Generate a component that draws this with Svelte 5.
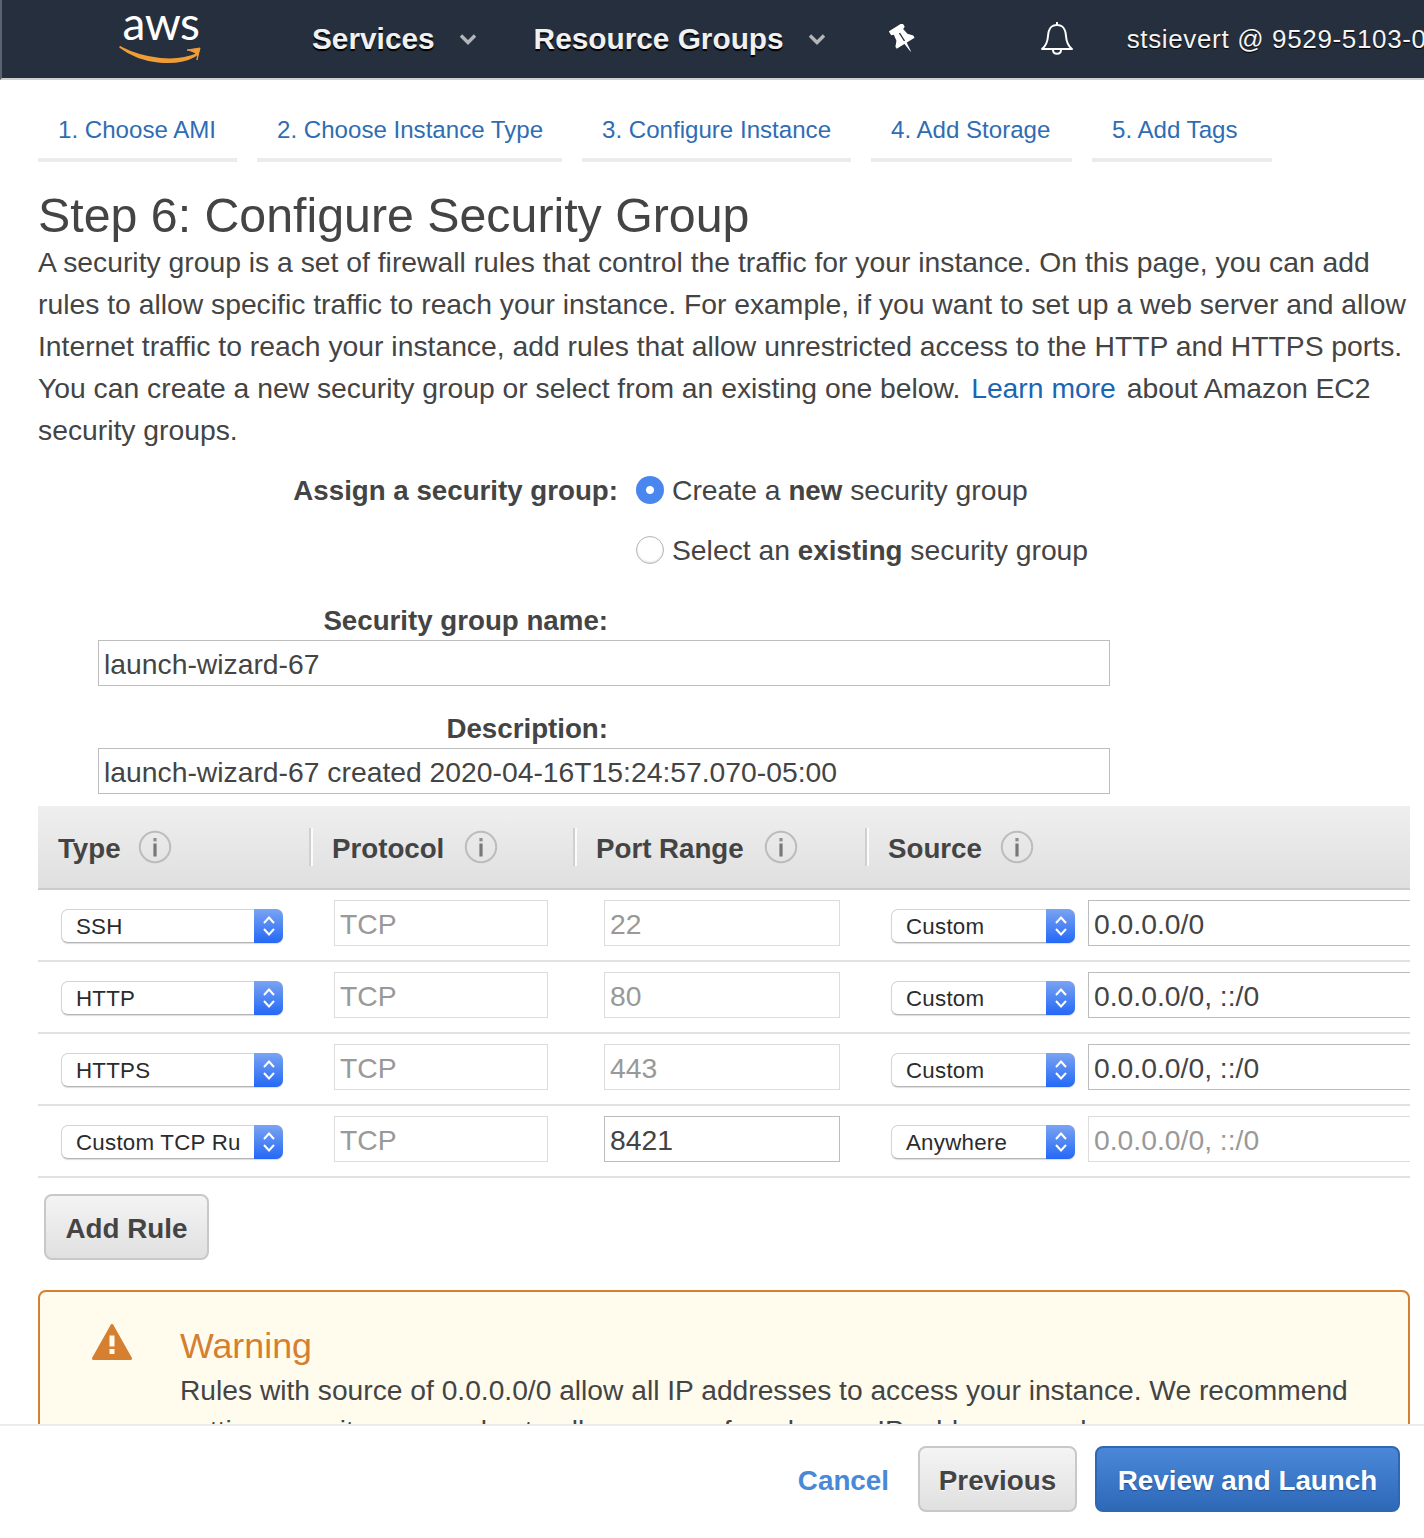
<script>
  const tabs = ['1. Choose AMI', '2. Choose Instance Type', '3. Configure Instance', '4. Add Storage', '5. Add Tags'];
  const tabWidths = [199, 305, 269, 201, 180];
  const cols = [
    { label: 'Type', w: 271, gap: 17 },
    { label: 'Protocol', w: 264, gap: 20 },
    { label: 'Port Range', w: 292, gap: 20 },
    { label: 'Source', w: 545, gap: 18 }
  ];
  const rows = [
    { type: 'SSH', port: '22', portOn: false, src: 'Custom', cidr: '0.0.0.0/0', cidrOn: true },
    { type: 'HTTP', port: '80', portOn: false, src: 'Custom', cidr: '0.0.0.0/0, ::/0', cidrOn: true },
    { type: 'HTTPS', port: '443', portOn: false, src: 'Custom', cidr: '0.0.0.0/0, ::/0', cidrOn: true },
    { type: 'Custom TCP Rule', port: '8421', portOn: true, src: 'Anywhere', cidr: '0.0.0.0/0, ::/0', cidrOn: false }
  ];
</script>

{#snippet chevron()}
  <svg class="chev" width="18" height="12" viewBox="0 0 18 12"><path d="M2 2.5 L9 9.5 L16 2.5" fill="none" stroke="#b4b6b8" stroke-width="3.4"/></svg>
{/snippet}

{#snippet spinner()}
  <span class="spin">
    <svg width="14" height="24" viewBox="0 0 14 24"><path d="M2 9 L7 3.5 L12 9 M2 15 L7 20.5 L12 15" fill="none" stroke="#fff" stroke-width="2"/></svg>
  </span>
{/snippet}

<div class="page">
  <header class="top">
    <div class="logo">
      <span class="aws">aws</span>
      <svg class="smile" width="84" height="20" viewBox="0 0 84 20">
        <path d="M1 2 C22 18 56 22 76 11 L78 9 C58 18 26 15 1 2 Z" fill="#ef9d36" stroke="#ef9d36" stroke-width="1.6" stroke-linejoin="round"/>
        <path d="M68 5 L81 3 L78 15 C79 10 78 7 68 5 Z" fill="#ef9d36" stroke="#ef9d36" stroke-width="1" stroke-linejoin="round"/>
      </svg>
    </div>
    <span class="nav services">Services</span>
    {@render chevron()}
    <span class="nav groups">Resource Groups</span>
    {@render chevron()}
    <svg class="pin" width="28" height="30" viewBox="0 0 28 30">
      <g transform="rotate(-32 14 15)" fill="#fff">
        <path d="M6 1 H22 V5.5 L19.5 6.5 L20.5 13 L24.5 17.5 V20 H3.5 V17.5 L7.5 13 L8.5 6.5 L6 5.5 Z"/>
        <path d="M12.6 19 H15.4 L14.3 29.5 H13.7 Z"/>
      </g>
      <path d="M10.5 9 L15.5 17" stroke="#262f3e" stroke-width="1.4"/>
    </svg>
    <svg class="bell" width="34" height="36" viewBox="0 0 34 36">
      <path d="M17 2 V5 M17 5 C10 5 8.5 10 8 16 C7.6 22 6 26 2 29 H32 C28 26 26.4 22 26 16 C25.5 10 24 5 17 5 Z" fill="none" stroke="#fff" stroke-width="2" stroke-linejoin="round"/>
      <path d="M13 30 C13 35 21 35 21 30" fill="none" stroke="#fff" stroke-width="2"/>
    </svg>
    <span class="user">stsievert @ 9529-5103-0</span>
  </header>

  <main class="content">
    <nav class="tabs">
      {#each tabs as tab, i}
        <a class="tab" style="width: {tabWidths[i]}px">{tab}</a>
      {/each}
    </nav>

    <h1>Step 6: Configure Security Group</h1>
    <p class="intro">A security group is a set of firewall rules that control the traffic for your instance. On this page, you can add rules to allow specific traffic to reach your instance. For example, if you want to set up a web server and allow Internet traffic to reach your instance, add rules that allow unrestricted access to the HTTP and HTTPS ports. You can create a new security group or select from an existing one below. <a class="more">Learn more</a> about Amazon EC2 security groups.</p>

    <div class="assign">
      <div class="assign-label"><b>Assign a security group:</b></div>
      <div class="options">
        <div class="option"><span class="radio on"></span><span>Create a <b>new</b> security group</span></div>
        <div class="option"><span class="radio"></span><span>Select an <b>existing</b> security group</span></div>
      </div>
    </div>

    <div class="field">
      <label class="field-label" for="sg-name">Security group name:</label>
      <div class="field-input" id="sg-name">launch-wizard-67</div>
    </div>
    <div class="field">
      <label class="field-label" for="sg-desc">Description:</label>
      <div class="field-input" id="sg-desc">launch-wizard-67 created 2020-04-16T15:24:57.070-05:00</div>
    </div>

    <section class="table">
      <div class="thead">
        {#each cols as col, i}
          <div class="th" class:first={i === 0} style="width: {col.w}px">
            <span>{col.label}</span>
            <svg class="info" style="margin-left: {col.gap}px" width="34" height="34" viewBox="0 0 34 34">
              <circle cx="17" cy="17" r="15.2" fill="none" stroke="#bcbcbc" stroke-width="2"/>
              <rect x="15.4" y="8" width="3.2" height="3.4" fill="#8f8f8f"/>
              <rect x="15.4" y="13.5" width="3.2" height="13" fill="#777"/>
            </svg>
          </div>
        {/each}
      </div>
      {#each rows as r}
        <div class="tr">
          <div class="cell c1">
            <div class="select type"><span class="sel-text">{r.type}</span>{@render spinner()}</div>
          </div>
          <div class="cell c2"><div class="input off proto">TCP</div></div>
          <div class="cell c3"><div class="input port" class:off={!r.portOn}>{r.port}</div></div>
          <div class="cell c4">
            <div class="select src"><span class="sel-text">{r.src}</span>{@render spinner()}</div>
            <div class="input cidr" class:off={!r.cidrOn}>{r.cidr}</div>
          </div>
        </div>
      {/each}
    </section>

    <button class="btn add">Add Rule</button>

    <section class="warning">
      <svg class="warn-icon" width="40" height="36" viewBox="0 0 40 36">
        <path d="M20 1.5 L38.5 34.5 H1.5 Z" fill="#d57f30" stroke="#d57f30" stroke-width="3" stroke-linejoin="round"/>
        <rect x="17.5" y="11.5" width="5" height="11" fill="#fffcee"/>
        <rect x="17.5" y="25" width="5" height="5" fill="#fffcee"/>
      </svg>
      <div class="warn-body">
        <h2>Warning</h2>
        <p>Rules with source of 0.0.0.0/0 allow all IP addresses to access your instance. We recommend setting security group rules to allow access from known IP addresses only.</p>
      </div>
    </section>
  </main>

  <footer class="foot">
    <a class="cancel">Cancel</a>
    <button class="btn prev">Previous</button>
    <button class="btn primary">Review and Launch</button>
  </footer>
</div>

<style>
  :global(body) {
    margin: 0;
    background: #fff;
    overflow: hidden;
  }
  .page {
    width: 1424px;
    height: 1538px;
    display: flex;
    flex-direction: column;
    overflow: hidden;
    font-family: "Liberation Sans", Arial, sans-serif;
    font-size: 28.3px;
    color: #444;
    background: #fff;
  }
  b {
    font-size: 27.7px;
  }
  .top {
    flex: none;
    box-sizing: border-box;
    height: 80px;
    display: flex;
    align-items: center;
    background: #262f3e;
    border-left: 2px solid #5a626e;
    border-bottom: 2px solid #cfcfcf;
    white-space: nowrap;
    overflow: hidden;
  }
  .logo {
    width: 84px;
    margin-left: 117px;
    height: 66px;
    display: flex;
    flex-direction: column;
    align-items: center;
    margin-top: -15px;
  }
  .aws {
    font-family: Lato, sans-serif;
    font-size: 46px;
    line-height: 42px;
    color: #fff;
    letter-spacing: -0.6px;
    margin-top: 3px;
  }
  .smile {
    display: block;
    margin-top: 1px;
  }
  .nav {
    font-size: 29.8px;
    font-weight: 700;
    color: #f1f1f1;
    text-shadow: 0 2px 1px #000;
  }
  .services {
    margin-left: 109px;
  }
  .chev {
    margin-left: 24px;
    flex: none;
  }
  .groups {
    margin-left: 57px;
  }
  .pin {
    margin-left: 63px;
    flex: none;
  }
  .bell {
    margin-left: 123px;
    margin-top: -2px;
    flex: none;
  }
  .user {
    margin-left: 53px;
    font-size: 26px;
    letter-spacing: 0.65px;
    color: #f4f4f4;
    text-shadow: 0 1px 1px #000;
  }
  .content {
    flex: 1;
    min-height: 0;
    overflow: hidden;
    padding-left: 38px;
  }
  .tabs {
    display: flex;
    gap: 20px;
    height: 82px;
  }
  .tab {
    box-sizing: border-box;
    height: 82px;
    padding: 34px 0 0 20px;
    font-size: 24.1px;
    line-height: 32px;
    color: #2f6db3;
    border-bottom: 4px solid #ebebeb;
    white-space: nowrap;
  }
  h1 {
    margin: 0;
    padding-top: 27px;
    font-size: 48.3px;
    font-weight: 400;
    line-height: 52px;
    color: #444;
    white-space: nowrap;
  }
  .intro {
    margin: 0;
    width: 1376px;
    line-height: 42px;
  }
  .more {
    color: #1b65b5;
    margin: 0 3px 0 3px;
  }
  .assign {
    display: flex;
    margin-top: 9px;
  }
  .assign-label {
    width: 580px;
    box-sizing: border-box;
    height: 60px;
    line-height: 60px;
    text-align: right;
  }
  .options {
    margin-left: 18px;
  }
  .option {
    height: 60px;
    display: flex;
    align-items: center;
    gap: 8px;
  }
  .radio {
    box-sizing: border-box;
    width: 28px;
    height: 28px;
    border-radius: 50%;
    border: 1.5px solid #b5b5b5;
    background: #fff;
    box-shadow: inset 0 -1px 2px #ddd;
    flex: none;
  }
  .radio.on {
    border: none;
    box-shadow: none;
    background: radial-gradient(circle, #fff 0, #fff 3.5px, #4a86f0 4.5px);
  }
  .field {
    margin-left: 60px;
  }
  .field-label {
    display: block;
    width: 510px;
    height: 42px;
    line-height: 42px;
    font-size: 27.7px;
    font-weight: 700;
    text-align: right;
  }
  .field + .field {
    margin-top: 22px;
  }
  .assign + .field {
    margin-top: 20px;
  }
  .field-input {
    box-sizing: border-box;
    width: 1012px;
    height: 46px;
    margin-top: -2px;
    padding-left: 5px;
    line-height: 47px;
    border: 1px solid #bdbdbd;
    white-space: nowrap;
  }
  .table {
    width: 1372px;
    margin-top: 12px;
    overflow: hidden;
  }
  .thead {
    box-sizing: border-box;
    height: 84px;
    display: flex;
    background: linear-gradient(#efefef, #dfdfdf);
    border-bottom: 2px solid #cccccc;
  }
  .th {
    box-sizing: border-box;
    display: flex;
    align-items: center;
    font-size: 27.7px;
    font-weight: 700;
    padding-left: 21px;
    margin-top: 22px;
    height: 38px;
    border-left: 2px solid #d0d0d0;
    box-shadow: inset 2px 0 0 #fbfbfb;
    flex: none;
    white-space: nowrap;
  }
  .th.first {
    border-left: 0;
    box-shadow: none;
    padding-left: 20px;
  }
  .th > span {
    position: relative;
    top: 2px;
  }
  .info {
    flex: none;
  }
  .tr {
    box-sizing: border-box;
    height: 72px;
    display: flex;
    border-bottom: 2px solid #e1e1e1;
  }
  .cell {
    box-sizing: border-box;
    display: flex;
    flex: none;
    height: 70px;
  }
  .c1 {
    width: 272px;
    padding-left: 23px;
  }
  .c2 {
    width: 264px;
    padding-left: 24px;
  }
  .c3 {
    width: 292px;
    padding-left: 30px;
  }
  .c4 {
    width: 600px;
    padding-left: 25px;
  }
  .select {
    box-sizing: border-box;
    height: 34px;
    margin-top: 19px;
    display: flex;
    background: #fff;
    border: 1px solid #d4d4d4;
    border-bottom-color: #b5b5b5;
    border-radius: 7px;
    box-shadow: 0 1px 1px #dcdcdc;
    font-size: 22.3px;
    letter-spacing: 0.25px;
    line-height: 34px;
    color: #2b2b2b;
    flex: none;
  }
  .type {
    width: 222px;
  }
  .src {
    width: 184px;
  }
  .sel-text {
    flex: 1;
    min-width: 0;
    margin: 0 14px;
    overflow: hidden;
    white-space: nowrap;
  }
  .spin {
    flex: none;
    width: 29px;
    margin: -1px -1px -1px 0;
    border-radius: 0 7px 7px 0;
    background: linear-gradient(#7aa4f2, #2468f6);
    display: flex;
    align-items: center;
    justify-content: center;
  }
  .input {
    box-sizing: border-box;
    height: 46px;
    margin-top: 10px;
    padding-left: 5px;
    line-height: 47px;
    border: 1px solid #bcbcbc;
    color: #444;
    white-space: nowrap;
    flex: none;
  }
  .input.off {
    border-color: #dcdcdc;
    color: #999;
  }
  .proto {
    width: 214px;
  }
  .port {
    width: 236px;
  }
  .cidr {
    width: 420px;
    margin-left: 13px;
  }
  .btn {
    box-sizing: border-box;
    height: 66px;
    border-radius: 8px;
    border: 2px solid #c8c8c8;
    background: linear-gradient(#f4f4f4, #e0e0e0);
    font-family: inherit;
    font-size: 27.8px;
    font-weight: 700;
    color: #444;
    padding: 3px 0 0;
  }
  .add {
    display: block;
    width: 165px;
    margin: 16px 0 0 6px;
  }
  .warning {
    box-sizing: border-box;
    width: 1372px;
    margin-top: 30px;
    height: 200px;
    display: flex;
    background: #fffcee;
    border: 2px solid #d57f30;
    border-radius: 8px;
  }
  .warn-icon {
    flex: none;
    margin: 32px 0 0 52px;
  }
  .warn-body {
    margin-left: 48px;
    width: 1190px;
  }
  .warn-body h2 {
    margin: 0;
    padding-top: 32px;
    font-size: 35.8px;
    font-weight: 400;
    line-height: 44px;
    color: #d57f30;
  }
  .warn-body p {
    margin: 2px 0 0;
    font-size: 28.2px;
    line-height: 40px;
  }
  .foot {
    flex: none;
    box-sizing: border-box;
    height: 114px;
    border-top: 2px solid #ebebeb;
    display: flex;
    align-items: flex-start;
    padding: 20px 24px 0 0;
    justify-content: flex-end;
    width: 1424px;
  }
  .cancel {
    font-size: 27.8px;
    font-weight: 700;
    color: #4a88d8;
    line-height: 69px;
    margin-right: 29px;
  }
  .prev {
    width: 159px;
    margin-right: 18px;
    text-shadow: 0 1px 0 #fff;
  }
  .primary {
    width: 305px;
    color: #fff;
    border-color: #2f67b2;
    background: linear-gradient(#4b87d8, #2e69b8);
    text-shadow: 0 1px 1px #1d4d8f;
  }
</style>
